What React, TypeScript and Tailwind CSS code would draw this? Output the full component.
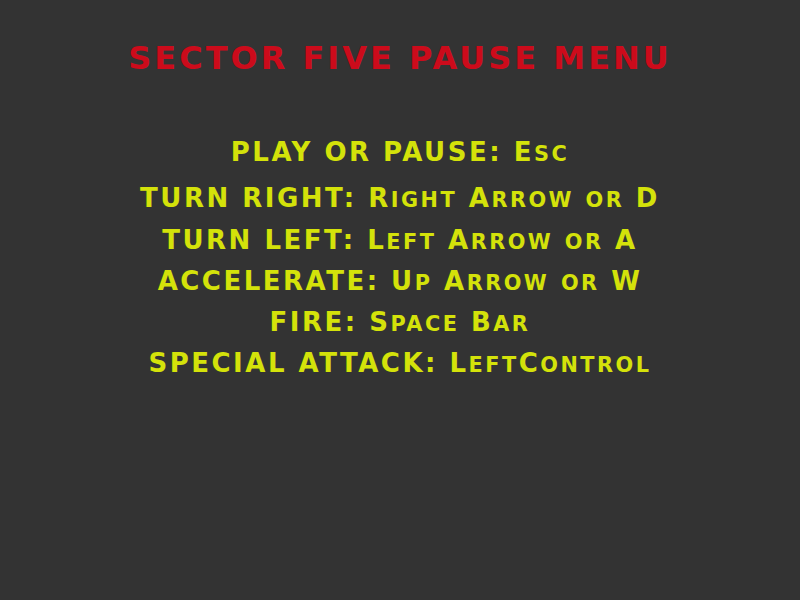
import React from 'react';

const controls = [
  'TURN RIGHT: Right Arrow or D',
  'TURN LEFT: Left Arrow or A',
  'ACCELERATE: Up Arrow or W',
  'FIRE: Space Bar',
  'SPECIAL ATTACK: LeftControl',
];

// lowercase runs are drawn as small caps, like Copperplate
function SmallCaps({ text }: { text: string }) {
  const parts = text.split(/([a-z]+)/);
  return (
    <>
      {parts.map((p, i) =>
        /^[a-z]+$/.test(p) ? (
          <span key={i} className="uppercase text-[0.8em] leading-none">{p}</span>
        ) : (
          <span key={i}>{p}</span>
        )
      )}
    </>
  );
}

export default function App() {
  return (
    <div className="w-[800px] h-[600px] bg-[#333333] flex flex-col items-center font-['DejaVu_Sans',sans-serif] font-bold">
      <h1 className="mt-[38px] text-[32px] leading-[40px] tracking-[3px] text-[#cc0b1b]">SECTOR FIVE PAUSE MENU</h1>
      <div className="mt-[54px] flex flex-col items-center text-[26px] tracking-[2.5px] text-[#d4e20a]">
        <p className="h-[41px] leading-[41px] mb-[5px]"><SmallCaps text="PLAY OR PAUSE: Esc" /></p>
        {controls.map((c) => (
          <p key={c} className="h-[41px] leading-[41px] first:mt-0 [&:nth-child(3)]:mt-px"><SmallCaps text={c} /></p>
        ))}
      </div>
    </div>
  );
}
